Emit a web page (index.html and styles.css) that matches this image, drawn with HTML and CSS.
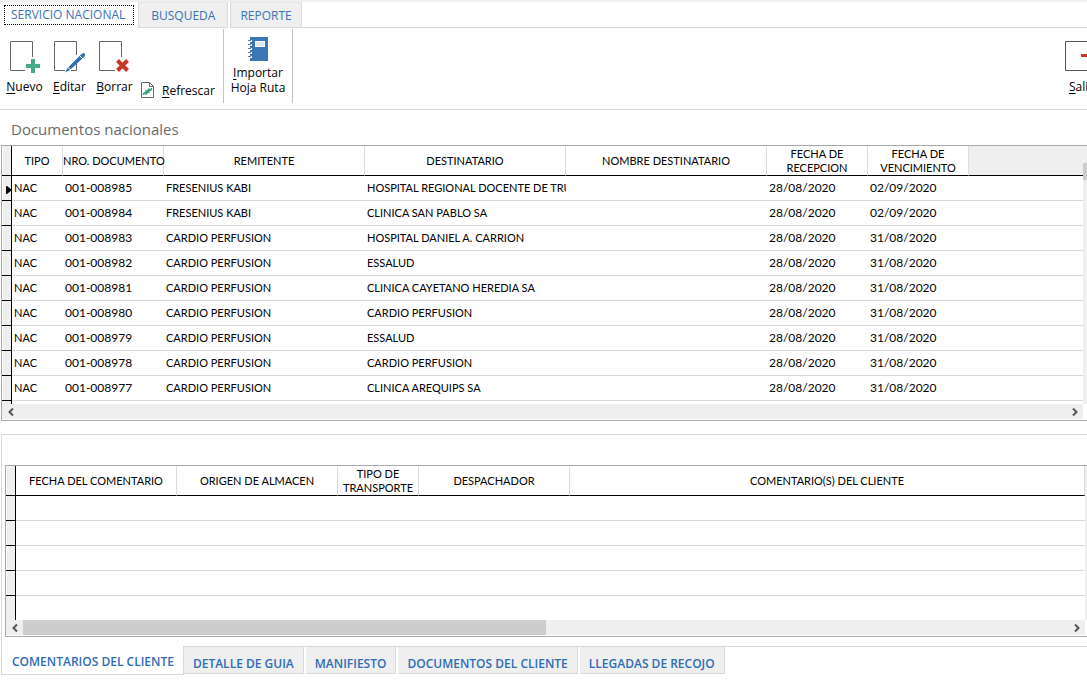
FILE: index.html
```html
<!DOCTYPE html>
<html lang="es">
<head>
<meta charset="utf-8">
<title>Servicio Nacional</title>
<link rel="stylesheet" href="styles.css">
</head>
<body>
<nav class="tabs" aria-label="Secciones">
  <button class="tab tab-active" type="button"><span class="focus">SERVICIO NACIONAL</span></button>
  <button class="tab" type="button">BUSQUEDA</button>
  <button class="tab tab-small" type="button">REPORTE</button>
  <span class="tabs-rest"></span>
</nav>

<div class="ribbon">
  <button class="tool" type="button">
    <svg width="34" height="34" viewBox="0 0 34 34"><path d="M24.500 17V1.500H2.500V30.500H17" fill="#fff" stroke="#666"/><path d="M23 19h4v5h5v4h-5v5h-4v-5h-5v-4h5z" fill="#45ab85"/></svg>
    <span><u>N</u>uevo</span>
  </button>
  <button class="tool" type="button">
    <svg width="34" height="34" viewBox="0 0 34 34"><path d="M23.500 15V1.500H1.500V30.500H12M18 30.500h5.500V23" fill="#fff" stroke="#666"/><path d="M28 14.500q2-2.500 3.500-1t-.5 3.500L17 30l-5 2.500L14.500 28z" fill="#2f6fb4"/><path d="M26 15l4 4M14 27l4 3" stroke="#fff"/></svg>
    <span><u>E</u>ditar</span>
  </button>
  <button class="tool" type="button">
    <svg width="34" height="34" viewBox="0 0 34 34"><path d="M23.500 17V1.500H1.500V30.500H17" fill="#fff" stroke="#666"/><path d="M19.500 20.500l10 10M29.500 20.500l-10 10" stroke="#c8371f" stroke-width="4"/></svg>
    <span><u>B</u>orrar</span>
  </button>
  <button class="tool tool-inline" type="button">
    <svg width="13" height="16" viewBox="0 0 13 16"><path d="M.5.500h8l4 4v11H.500z" fill="#fff" stroke="#666"/><path d="M8.500.500v4h4" fill="none" stroke="#666"/><path d="M10.500 6c0 2-1 2.500-2.500 2.500M2.500 13c0-2 1-2.500 2.500-2.500" fill="none" stroke="#2e9e75" stroke-width="1.500"/><path d="M8.500 5.500v6L5.500 8.500zM4.500 7.500v6l3-3z" fill="#2e9e75"/></svg>
    <span><u>R</u>efrescar</span>
  </button>
  <button class="tool tool-book" type="button">
    <svg width="22" height="26" viewBox="0 0 22 26"><path d="M3 1h18v24H3z" fill="#3b76b5"/><path d="M8 5h10v6H8z" fill="#fff"/><path d="M9 6h8v4H9z" fill="#dde7f2"/><path d="M2 4h3v2H2zM2 8h3v2H2zM2 12h3v2H2zM2 16h3v2H2zM2 20h3v2H2z" fill="#fff"/><path d="M1 4.500h3M1 8.500h3M1 12.500h3M1 16.500h3M1 20.500h3" stroke="#6d7780"/></svg>
    <span><u>I</u>mportar<br>Hoja Ruta</span>
  </button>
  <button class="tool tool-exit" type="button">
    <svg width="34" height="34" viewBox="0 0 34 34"><path d="M30 10V1.500H.500V30.500H30V24" fill="#fff" stroke="#555"/><path d="M16 14h10v-4l7 6-7 6v-5H16z" fill="#c8371f"/></svg>
    <span><u>S</u>alir</span>
  </button>
</div>

<h1 class="title">Documentos nacionales</h1>

<section class="grid grid-docs">
  <div class="grid-main">
    <table>
      <colgroup><col class="c-sel"><col class="c-tipo"><col class="c-date"><col class="c-name"><col class="c-name"><col class="c-name"><col class="c-date"><col class="c-date"><col></colgroup>
      <thead><tr><th class="sel"></th><th>TIPO</th><th class="nowrap">NRO. DOCUMENTO</th><th>REMITENTE</th><th>DESTINATARIO</th><th>NOMBRE DESTINATARIO</th><th>FECHA DE<br>RECEPCION</th><th>FECHA DE<br>VENCIMIENTO</th><th class="blank"></th></tr></thead>
      <tbody>
        <tr><td class="sel"><svg class="marker" width="6" height="8" viewBox="0 0 6 8"><path d="M0 0h1l5 4-5 4H0z"/></svg></td><td>NAC</td><td class="num">001-008985</td><td>FRESENIUS KABI</td><td>HOSPITAL REGIONAL DOCENTE DE TRU</td><td></td><td class="num">28/08/2020</td><td class="num">02/09/2020</td><td></td></tr>
        <tr><td class="sel"></td><td>NAC</td><td class="num">001-008984</td><td>FRESENIUS KABI</td><td>CLINICA SAN PABLO SA</td><td></td><td class="num">28/08/2020</td><td class="num">02/09/2020</td><td></td></tr>
        <tr><td class="sel"></td><td>NAC</td><td class="num">001-008983</td><td>CARDIO PERFUSION</td><td>HOSPITAL DANIEL A. CARRION</td><td></td><td class="num">28/08/2020</td><td class="num">31/08/2020</td><td></td></tr>
        <tr><td class="sel"></td><td>NAC</td><td class="num">001-008982</td><td>CARDIO PERFUSION</td><td>ESSALUD</td><td></td><td class="num">28/08/2020</td><td class="num">31/08/2020</td><td></td></tr>
        <tr><td class="sel"></td><td>NAC</td><td class="num">001-008981</td><td>CARDIO PERFUSION</td><td>CLINICA CAYETANO HEREDIA SA</td><td></td><td class="num">28/08/2020</td><td class="num">31/08/2020</td><td></td></tr>
        <tr><td class="sel"></td><td>NAC</td><td class="num">001-008980</td><td>CARDIO PERFUSION</td><td>CARDIO PERFUSION</td><td></td><td class="num">28/08/2020</td><td class="num">31/08/2020</td><td></td></tr>
        <tr><td class="sel"></td><td>NAC</td><td class="num">001-008979</td><td>CARDIO PERFUSION</td><td>ESSALUD</td><td></td><td class="num">28/08/2020</td><td class="num">31/08/2020</td><td></td></tr>
        <tr><td class="sel"></td><td>NAC</td><td class="num">001-008978</td><td>CARDIO PERFUSION</td><td>CARDIO PERFUSION</td><td></td><td class="num">28/08/2020</td><td class="num">31/08/2020</td><td></td></tr>
        <tr><td class="sel"></td><td>NAC</td><td class="num">001-008977</td><td>CARDIO PERFUSION</td><td>CLINICA AREQUIPS SA</td><td></td><td class="num">28/08/2020</td><td class="num">31/08/2020</td><td></td></tr>
      </tbody>
    </table>
    <div class="tail"></div>
    <div class="hbar">
      <button type="button" aria-label="Izquierda"><svg width="8" height="8" viewBox="0 0 8 8"><path d="M6 .5L2.500 4 6 7.500"/></svg></button>
      <button type="button" aria-label="Derecha"><svg width="8" height="8" viewBox="0 0 8 8"><path d="M2 .5L5.500 4 2 7.500"/></svg></button>
    </div>
  </div>
  <div class="vbar"><div class="vthumb"></div></div>
</section>

<section class="panel">
  <div class="grid grid-notes">
    <div class="grid-main">
      <table>
        <colgroup><col class="c-sel"><col class="c-note"><col class="c-note"><col class="c-trans"><col class="c-desp"><col></colgroup>
        <thead><tr><th class="sel"></th><th>FECHA DEL COMENTARIO</th><th>ORIGEN DE ALMACEN</th><th>TIPO DE TRANSPORTE</th><th>DESPACHADOR</th><th>COMENTARIO(S) DEL CLIENTE</th></tr></thead>
        <tbody>
          <tr><td class="sel"></td><td></td><td></td><td></td><td></td><td></td></tr>
          <tr><td class="sel"></td><td></td><td></td><td></td><td></td><td></td></tr>
          <tr><td class="sel"></td><td></td><td></td><td></td><td></td><td></td></tr>
          <tr><td class="sel"></td><td></td><td></td><td></td><td></td><td></td></tr>
        </tbody>
      </table>
      <div class="tail tail-tall"></div>
      <div class="hbar">
        <button type="button" aria-label="Izquierda"><svg width="8" height="8" viewBox="0 0 8 8"><path d="M6 .5L2.500 4 6 7.500"/></svg></button>
        <div class="track"><div class="hthumb"></div></div>
        <button type="button" aria-label="Derecha"><svg width="8" height="8" viewBox="0 0 8 8"><path d="M2 .5L5.500 4 2 7.500"/></svg></button>
      </div>
    </div>
    <div class="vbar"></div>
  </div>
</section>

<nav class="pages" aria-label="Detalle">
  <button class="page page-active" type="button">COMENTARIOS DEL CLIENTE</button>
  <div class="pages-rest">
    <button class="page" type="button">DETALLE DE GUIA</button>
    <button class="page" type="button">MANIFIESTO</button>
    <button class="page" type="button">DOCUMENTOS DEL CLIENTE</button>
    <button class="page" type="button">LLEGADAS DE RECOJO</button>
  </div>
</nav>
</body>
</html>
```
FILE: styles.css
```css
* { box-sizing: border-box; }
body {
  margin: 0;
  overflow: hidden;
  background: #fff;
  color: #000;
  font: 12px/15px "Open Sans", "Noto Sans", sans-serif;
}
button {
  margin: 0;
  padding: 0;
  border: 0;
  background: none;
  color: inherit;
  font: inherit;
}
svg { display: block; }
u { text-underline-offset: 2px; }

.tabs {
  display: flex;
  height: 28px;
  border-top: 2px solid #efefef;
  color: #3b72b5;
}
.tab {
  padding: 0 12px;
  border: 1px solid #d9d9d9;
  border-top-color: #e6e6e6;
  background: #efefef;
  margin-right: 2px;
}
.tab-small { padding: 0 9px; }
.tab-active {
  padding: 2px 4px 3px;
  margin: 0;
  border: 0;
  background: #fff;
}
.focus {
  display: block;
  height: 20px;
  padding: 0 8px 0 6px;
  border: 1px dotted #000;
  line-height: 17px;
}
.tabs-rest {
  flex: 1;
  margin-left: -2px;
  border-bottom: 1px solid #d9d9d9;
}

.ribbon {
  display: flex;
  height: 82px;
  padding: 1px 0 0 2px;
  overflow: hidden;
  border-bottom: 1px solid #d9d9d9;
}
.tool {
  display: flex;
  flex-direction: column;
  align-items: center;
  gap: 5px;
  flex: none;
  width: 45px;
  padding-top: 11px;
}
.tool svg { flex: none; }
.tool-inline {
  flex-direction: row;
  align-items: flex-end;
  gap: 8px;
  width: 86px;
  padding: 0 0 11px 4px;
  height: 80px;
}
.tool-book {
  gap: 3px;
  width: 70px;
  height: 74px;
  padding-top: 7px;
  border: solid #c3c3c3;
  border-width: 0 1px;
}
.tool-exit {
  align-items: flex-start;
  width: 22px;
  margin-left: auto;
  overflow: hidden;
}
.tool-exit span { padding-left: 4px; }

.title {
  margin: 0;
  padding: 9px 11px 6px;
  color: #6b6b6b;
  font-size: 15px;
  font-weight: 400;
  line-height: 20px;
}

.grid {
  display: flex;
  border: 1px solid #a9a9ac;
  border-right: 0;
}
.grid-docs { margin-left: 1px; }
.grid-main { flex: 1; min-width: 0; }
table {
  width: 100%;
  table-layout: fixed;
  border-collapse: separate;
  border-spacing: 0;
  font-family: Lato, sans-serif;
  font-size: 11px;
}
.c-sel { width: 10px; }
.c-tipo { width: 51px; }
.c-date { width: 101px; }
.c-name { width: 201px; }
.c-note { width: 161px; }
.c-trans { width: 81px; }
.c-desp { width: 151px; }
th {
  height: 30px;
  padding: 0;
  border-right: 1px solid #dcdcdc;
  border-bottom: 1px solid #000;
  font-weight: 400;
  line-height: 14px;
}
td {
  height: 25px;
  padding: 0 0 1px 2px;
  overflow: hidden;
  border-bottom: 1px solid #d9d9d9;
  white-space: nowrap;
}
.num { font-size: 12px; }
.nowrap { white-space: nowrap; }
.sel {
  padding: 0;
  border-right: 1px solid #000;
  border-bottom-color: #000;
  background: #efefef;
  box-shadow: inset 1px 0 #fff;
}
.marker { margin: 3px 0 0 4px; }
.blank { background: #efefef; border-right: 0; }
.tail {
  width: 10px;
  height: 3px;
  border-right: 1px solid #000;
  background: #efefef;
}
.tail-tall { height: 24px; }
.hbar {
  display: flex;
  justify-content: space-between;
  height: 16px;
  background: #efefef;
  border-bottom: 1px solid #fff;
}
.hbar button {
  display: flex;
  flex: none;
  align-items: center;
  justify-content: center;
  width: 17px;
}
.hbar path { fill: none; stroke: #555; stroke-width: 2; }
.track { flex: 1; }
.hthumb { width: 50%; height: 100%; background: #cdcdcd; }
.vbar {
  flex: none;
  width: 4px;
  margin-bottom: 16px;
  padding-top: 17px;
  background: #efefef;
}
.vthumb { height: 17px; background: #cdcdcd; }

.panel {
  margin: 13px 0 0 1px;
  padding: 30px 0 9px 3px;
  border: solid #d9d9d9;
  border-width: 1px 0 0 1px;
}
.grid-notes .vbar { width: 2px; }

.pages {
  display: flex;
  align-items: flex-start;
  margin-left: 1px;
  color: #2f6db5;
  font-weight: 600;
}
.page {
  height: 27px;
  padding: 6px 9px 0;
  border: solid #d9d9d9;
  border-width: 0 1px 1px 0;
  background: #efefef;
}
.page-active {
  height: 29px;
  padding: 2px 9px 0 10px;
  border-left-width: 1px;
  background: #fff;
}
.pages-rest {
  display: flex;
  flex: 1;
  gap: 2px;
  border-top: 1px solid #d9d9d9;
}
```
